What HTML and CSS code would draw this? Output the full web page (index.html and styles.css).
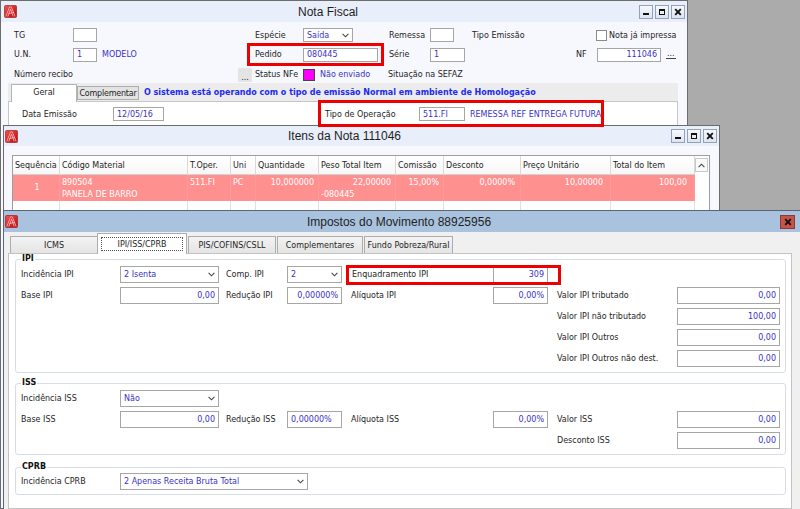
FILE: index.html
```html
<!DOCTYPE html>
<html lang="pt">
<head>
<meta charset="utf-8">
<title>Nota Fiscal</title>
<link rel="stylesheet" href="styles.css">
</head>
<body>
<svg class="defs" aria-hidden="true">
  <defs>
    <linearGradient id="ig" x1="0" y1="0" x2="1" y2="1">
      <stop offset="0" stop-color="#f25050"/>
      <stop offset="1" stop-color="#b30d0d"/>
    </linearGradient>
  </defs>
  <symbol id="ico" viewBox="0 0 13 13">
    <rect x="0.5" y="0.5" width="12" height="12" rx="1" fill="url(#ig)" stroke="#9c0f0f" stroke-width="0.6"/>
    <path d="M1.8 11.5 L5.6 1.8 L7.2 1.8 L11.2 11.5" fill="none" stroke="#ff9a9a" stroke-width="1"/>
    <path d="M3.8 11.5 L6.6 4 L9.2 11.5 M4.6 8.6 L10 7.4" fill="none" stroke="#ffd2d2" stroke-width="0.7"/>
  </symbol>
  <symbol id="chev" viewBox="0 0 7 5">
    <path d="M0.6 0.8 L3.5 3.8 L6.4 0.8" fill="none" stroke="#444" stroke-width="1.1"/>
  </symbol>
  <symbol id="bmin" viewBox="0 0 12 12"><rect x="3" y="7" width="6" height="2" fill="#111"/></symbol>
  <symbol id="bmax" viewBox="0 0 12 12"><rect x="3.5" y="3.5" width="5" height="5" fill="none" stroke="#111"/><rect x="3" y="3" width="6" height="2" fill="#111"/></symbol>
  <symbol id="bcls" viewBox="0 0 12 12"><path d="M3.2 3.2 L8.8 8.8 M8.8 3.2 L3.2 8.8" stroke="#111" stroke-width="1.9"/></symbol>
</svg>

<!-- Window 1: Nota Fiscal -->
<section class="win win-nf">
  <header class="tbar">
    <svg class="appicon"><use href="#ico"/></svg>
    <h1 class="ttl">Nota Fiscal</h1>
    <div class="wbtns">
      <span class="wb"><svg><use href="#bmin"/></svg></span>
      <span class="wb"><svg><use href="#bmax"/></svg></span>
      <span class="wb"><svg><use href="#bcls"/></svg></span>
    </div>
  </header>

  <div class="nf-form">
    <div class="nf-row r1">
      <span class="c1">TG</span>
      <span class="c2 tb w24"></span>
      <span class="c5">Espécie</span>
      <span class="c6 sel w50">Saída<svg class="chev"><use href="#chev"/></svg></span>
      <span class="c7">Remessa</span>
      <span class="c8 tb w24"></span>
      <span class="c9">Tipo Emissão</span>
      <span class="c11 s2 chk"><span class="box"></span>Nota já impressa</span>
    </div>
    <div class="nf-row r2">
      <span class="c1">U.N.</span>
      <span class="c2 tb w24">1</span>
      <span class="c3 val">MODELO</span>
      <span class="c5">Pedido</span>
      <span class="c6 tb w75">080445</span>
      <span class="c7">Série</span>
      <span class="c8 tb w35">1</span>
      <span class="c10">NF</span>
      <span class="c11 tb w64 r">111046</span>
      <span class="c12 dots">...</span>
    </div>
    <div class="nf-row r3">
      <span class="c1 s3">Número recibo</span>
      <span class="c4 dotbtn">...</span>
      <span class="c5">Status NFe</span>
      <span class="c6 status"><span class="mag"></span><span class="val">Não enviado</span></span>
      <span class="c7 s3 sefaz">Situação na SEFAZ</span>
    </div>
  </div>

  <div class="nf-tabs">
    <div class="nf-strip">
      <span class="nt on">Geral</span>
      <span class="nt">Complementar</span>
      <span class="msg">O sistema está operando com o tipo de emissão Normal em ambiente de Homologação</span>
    </div>
    <div class="nf-panel">
      <span>Data Emissão</span>
      <span class="tb w51">12/05/16</span>
      <span>Tipo de Operação</span>
      <span class="tb w46">511.FI</span>
      <span class="val">REMESSA REF ENTREGA FUTURA</span>
    </div>
  </div>

  <div class="mark mark-pedido"></div>
  <div class="mark mark-tipo"></div>
</section>

<!-- Window 2: Itens da Nota -->
<section class="win win-it">
  <header class="tbar">
    <svg class="appicon"><use href="#ico"/></svg>
    <h1 class="ttl">Itens da Nota 111046</h1>
    <div class="wbtns">
      <span class="wb"><svg><use href="#bmin"/></svg></span>
      <span class="wb"><svg><use href="#bmax"/></svg></span>
      <span class="wb"><svg><use href="#bcls"/></svg></span>
    </div>
  </header>
  <div class="grid">
    <div class="vscroll"><span class="sup"><svg class="chev up"><use href="#chev"/></svg></span></div>

    <span class="hc">Sequência</span>
    <span class="hc">Código Material</span>
    <span class="hc">T.Oper.</span>
    <span class="hc">Uni</span>
    <span class="hc">Quantidade</span>
    <span class="hc">Peso Total Item</span>
    <span class="hc">Comissão</span>
    <span class="hc">Desconto</span>
    <span class="hc">Preço Unitário</span>
    <span class="hc">Total do Item</span>

    <span class="dc ctr">1</span>
    <span class="dc">890504<br>PANELA DE BARRO</span>
    <span class="dc">511.FI</span>
    <span class="dc">PC</span>
    <span class="dc r">10,000000</span>
    <span class="dc"><span class="rl">22,00000</span>-080445</span>
    <span class="dc r">15,00%</span>
    <span class="dc r p5">0,0000%</span>
    <span class="dc r p7">10,00000</span>
    <span class="dc r p7">100,00</span>

    <span class="bc"></span><span class="bc"></span><span class="bc"></span><span class="bc"></span><span class="bc"></span>
    <span class="bc"></span><span class="bc"></span><span class="bc"></span><span class="bc"></span><span class="bc"></span>
  </div>
</section>

<!-- Window 3: Impostos do Movimento -->
<section class="win win-im">
  <header class="tbar">
    <svg class="appicon"><use href="#ico"/></svg>
    <h1 class="ttl">Impostos do Movimento 88925956</h1>
    <div class="wbtns">
      <span class="wb close"><svg><use href="#bcls"/></svg></span>
    </div>
  </header>
  <div class="im-tabs">
    <span class="it">ICMS</span>
    <span class="it on"><span class="focus">IPI/ISS/CPRB</span></span>
    <span class="it">PIS/COFINS/CSLL</span>
    <span class="it">Complementares</span>
    <span class="it">Fundo Pobreza/Rural</span>
  </div>
  <div class="im-panel">
    <fieldset class="grp">
      <legend>IPI</legend>
      <div class="form">
        <span class="lb">Incidência IPI</span>
        <span class="sel">2 Isenta<svg class="chev"><use href="#chev"/></svg></span>
        <span class="lb l2">Comp. IPI</span>
        <span class="sel">2<svg class="chev"><use href="#chev"/></svg></span>
        <span class="lb l3 enq">Enquadramento IPI</span>
        <span class="tb r">309</span>

        <span class="lb k1">Base IPI</span>
        <span class="tb r">0,00</span>
        <span class="lb l2">Redução IPI</span>
        <span class="tb r">0,00000%</span>
        <span class="lb l3">Alíquota IPI</span>
        <span class="tb r">0,00%</span>
        <span class="lb l4">Valor IPI tributado</span>
        <span class="tb r">0,00</span>

        <span class="lb k7">Valor IPI não tributado</span>
        <span class="tb r">100,00</span>
        <span class="lb k7">Valor IPI Outros</span>
        <span class="tb r">0,00</span>
        <span class="lb k7">Valor IPI Outros não dest.</span>
        <span class="tb r">0,00</span>
      </div>
    </fieldset>

    <fieldset class="grp iss">
      <legend>ISS</legend>
      <div class="form">
        <span class="lb">Incidência ISS</span>
        <span class="sel">Não<svg class="chev"><use href="#chev"/></svg></span>

        <span class="lb k1">Base ISS</span>
        <span class="tb r">0,00</span>
        <span class="lb l2">Redução ISS</span>
        <span class="tb">0,00000%</span>
        <span class="lb l3">Alíquota ISS</span>
        <span class="tb r">0,00%</span>
        <span class="lb l4">Valor ISS</span>
        <span class="tb r">0,00</span>

        <span class="lb k7">Desconto ISS</span>
        <span class="tb r">0,00</span>
      </div>
    </fieldset>

    <fieldset class="grp cprb">
      <legend>CPRB</legend>
      <div class="form">
        <span class="lb">Incidência CPRB</span>
        <span class="sel wide">2 Apenas Receita Bruta Total<svg class="chev"><use href="#chev"/></svg></span>
      </div>
    </fieldset>
  </div>
  <div class="mark mark-enq"></div>
</section>
</body>
</html>
```

FILE: styles.css
```css
* { box-sizing: border-box; }
html, body { margin: 0; padding: 0; }
body {
  width: 800px;
  height: 509px;
  overflow: hidden;
  position: relative;
  background: #ababab;
  font-family: "DejaVu Sans", Verdana, sans-serif;
  font-size: 8px;
  color: #1e1e1e;
}
.defs { position: absolute; width: 0; height: 0; overflow: hidden; }

/* ---------- windows ---------- */
.win {
  position: absolute;
  display: flex;
  flex-direction: column;
  border: 1px solid #6c6c6c;
  overflow: hidden;
}
.win-nf { left: 0; top: 0; width: 688px; height: 509px; background: #f6f8fd; }
.win-it { left: 3px; top: 125px; width: 717px; height: 384px; background: #f6f8fd; }
.win-im { left: 3px; top: 210px; width: 797px; height: 299px; background: #f0f0f0; border-color: #55657a; border-right: none; border-bottom: none; }

.tbar { flex: none; display: flex; align-items: center; padding: 0 2px 0 3px; }
.win-nf .tbar { height: 21px; background: #e9eefb; }
.win-it .tbar { height: 20px; background: #e9eefb; padding-left: 1px; }
.win-im .tbar { height: 21px; background: #a9c2de; padding: 0 5px 0 1px; }
.appicon { width: 13px; height: 13px; flex: none; }
.ttl {
  flex: 1;
  margin: 0;
  text-align: center;
  font-family: "Liberation Sans", Arial, sans-serif;
  font-weight: normal;
  font-size: 12px;
  color: #1f1f1f;
}
.wbtns { display: flex; gap: 2px; }
.wb {
  width: 14px; height: 14px;
  border: 1px solid #95a2b6;
  background: linear-gradient(#f6f8fc, #dde4f0);
  display: flex; align-items: center; justify-content: center;
}
.wb svg { width: 12px; height: 12px; }
.wb.close { width: 15px; background: #c7524a; border-color: #8e3a34; }

/* ---------- common fields ---------- */
.tb, .sel {
  height: 14px;
  border: 1px solid #a6a6a6;
  background: #fff;
  color: #3a32c8;
  padding: 0 3px;
  display: flex;
  align-items: center;
  white-space: nowrap;
}
.tb.r { justify-content: flex-end; }
.sel { justify-content: space-between; }
.chev { width: 7px; height: 5px; flex: none; }
.chev.up { transform: rotate(180deg); }
.val { color: #3a32c8; }

/* ---------- Nota Fiscal form ---------- */
.nf-form { margin-top: 3px; }
.nf-row {
  display: grid;
  grid-template-columns: 59px 29px 138px 15px 48px 86px 41px 42px 104px 21px 69px 1fr;
  align-items: center;
  padding-left: 13px;
  white-space: nowrap;
}
.nf-row.r1 { height: 20px; }
.nf-row.r2 { height: 19px; }
.nf-row.r3 { height: 21px; }
.c1 { grid-column-start: 1; }
.c2 { grid-column-start: 2; }
.c3 { grid-column-start: 3; }
.c4 { grid-column-start: 4; }
.c5 { grid-column-start: 5; }
.c6 { grid-column-start: 6; }
.c7 { grid-column-start: 7; }
.c8 { grid-column-start: 8; }
.c9 { grid-column-start: 9; }
.c10 { grid-column-start: 10; }
.c11 { grid-column-start: 11; }
.c12 { grid-column-start: 12; }
.s2 { grid-column-end: span 2; }
.s3 { grid-column-end: span 3; }
.w24 { width: 24px; }
.w35 { width: 35px; }
.w46 { width: 46px; }
.w50 { width: 50px; }
.w51 { width: 51px; }
.w64 { width: 64px; }
.w75 { width: 75px; }
.chk { display: flex; align-items: center; gap: 2px; margin-left: -1px; }
.chk .box { width: 11px; height: 11px; border: 1px solid #8a8a8a; background: #fff; }
.dots { justify-self: start; line-height: 9px; padding: 0 1px; border-bottom: 1px solid #444; margin-top: -2px; }
.dotbtn {
  width: 14px; height: 14px; margin-left: -2px;
  background: #e4e4e4;
  display: flex; align-items: flex-end; justify-content: center;
  line-height: 8px;
}
.status { display: flex; align-items: center; gap: 5px; }
.mag { width: 12px; height: 12px; background: #ff00ff; border: 1px solid #444; }
.sefaz { margin-left: -1px; }

.nf-tabs { margin: -2px 9px 0 7px; }
.nf-strip { display: flex; align-items: flex-end; height: 18px; background: #ececec; padding-left: 3px; }
.nt {
  height: 14px;
  width: 62px;
  margin-bottom: 1px;
  border: 1px solid #adadad;
  background: #e3e3e3;
  display: flex; align-items: center; justify-content: center;
  letter-spacing: -0.2px;
  white-space: nowrap;
}
.nt.on {
  width: 66px; height: 18px; margin-bottom: -1px;
  background: #fff; border-color: #b4b4b4; border-bottom: none;
  position: relative; z-index: 1;
  padding-bottom: 2px;
  letter-spacing: 0;
}
.msg { color: #1e2af0; font-weight: bold; margin-left: 5px; align-self: center; white-space: nowrap; padding-top: 1px; }
.nf-panel {
  height: 40px;
  background: #fff;
  border: 1px solid #c6c6c6;
  display: grid;
  grid-template-columns: 91px 212px 94px 51px 1fr;
  grid-auto-rows: 14px;
  align-items: center;
  padding: 5px 0 0 13px;
  white-space: nowrap;
}

/* red annotation frames */
.mark { position: absolute; border: 3px solid #ee0000; z-index: 5; }
.mark-pedido { left: 246px; top: 42px; width: 137px; height: 23px; }
.mark-tipo { left: 317px; top: 99px; width: 286px; height: 27px; }
.mark-enq { left: 342px; top: 54px; width: 215px; height: 20px; }

/* ---------- Itens grid ---------- */
.grid {
  margin: 9px 0 0 8px;
  width: 698px;
  flex: 1;
  border: 1px solid #9e9e9e;
  background: #fff;
  display: grid;
  grid-template-columns: 47px 128px 43px 25px 63px 77px 48px 77px 90px 84px 13px;
  grid-template-rows: 19px 26px 1fr;
  white-space: nowrap;
}
.vscroll { grid-column: 11; grid-row: 1 / span 3; background: #fff; padding: 2px 0 0 0; }
.sup {
  display: flex; align-items: center; justify-content: center;
  width: 13px; height: 14px;
  border: 1px solid #c8c8c8;
  background: #fafafa;
}
.hc {
  border-right: 1px solid #dadada;
  border-bottom: 1px solid #d2d2d2;
  padding-left: 2px;
  display: flex; align-items: center;
  background: linear-gradient(#ffffff, #f7f7f7);
}
.dc {
  background: #ff9090;
  color: #fff;
  padding: 2px 0 0 2px;
  line-height: 12px;
  border-right: 1px solid #ff9a9a;
}
.dc.r { text-align: right; padding-right: 4px; }
.dc.p5 { padding-right: 5px; }
.dc.p7 { padding-right: 7px; }
.dc.ctr { text-align: center; padding-top: 7px; }
.rl { display: block; text-align: right; padding-right: 4px; margin-left: -2px; }
.bc { border-right: 1px solid #e0e0e0; }

/* ---------- Impostos ---------- */
.im-tabs { flex: none; display: flex; align-items: flex-end; height: 21px; padding-left: 6px; }
.it {
  height: 17px;
  margin-right: 1px;
  border: 1px solid #acacac;
  border-bottom: none;
  background: linear-gradient(#f3f3f3, #e4e4e4);
  display: flex; align-items: center; justify-content: center;
  white-space: nowrap;
}
.it:nth-child(1) { width: 88px; margin-right: 0; }
.it:nth-child(2) { width: 90px; margin-left: -1px; }
.it:nth-child(3) { width: 88px; }
.it:nth-child(4) { width: 86px; }
.it:nth-child(5) { width: 89px; }
.it.on {
  height: 21px;
  margin-bottom: -1px;
  background: #fff;
  position: relative; z-index: 1;
  padding: 3px 3px 3px 3px;
  align-items: stretch;
}
.focus { flex: 1; border: 1px dotted #555; display: flex; align-items: center; justify-content: center; }

.im-panel {
  flex: 1;
  margin-left: 4px;
  width: 784px;
  background: #fff;
  border: 1px solid #c3c3c3;
  padding: 0 5px 0 6px;
}
.grp {
  margin: 0;
  padding: 2px 5px 5px 5px;
  border: 1px solid #d6dde7;
  border-radius: 3px;
  min-inline-size: 0;
}
.grp legend {
  padding: 0 1px;
  font-weight: bold;
  line-height: 10px;
  color: #111;
}
.grp.iss { margin-top: 5px; }
.grp.cprb { margin-top: 7px; padding-top: 1px; padding-bottom: 4px; }
.form {
  display: grid;
  grid-template-columns: 99px 99px 68px 55px 151px 55px 129px 103px;
  grid-auto-rows: 17px;
  row-gap: 4px;
  white-space: nowrap;
}
.form .tb, .form .sel { height: 17px; }
.lb { display: flex; align-items: center; grid-column-start: 1; }
.lb.l2 { grid-column-start: 3; padding-left: 7px; }
.lb.l3 { grid-column-start: 5; padding-left: 9px; }
.lb.l4 { grid-column-start: 7; padding-left: 9px; }
.lb.k1 { grid-column-start: 1; }
.lb.k7 { grid-column-start: 7; padding-left: 9px; }
.lb.enq { margin-left: 4px; padding-left: 5px; border: 1px solid #d6d6d6; border-right: none; }
.sel.wide { grid-column: 2 / span 3; width: 188px; }
```
